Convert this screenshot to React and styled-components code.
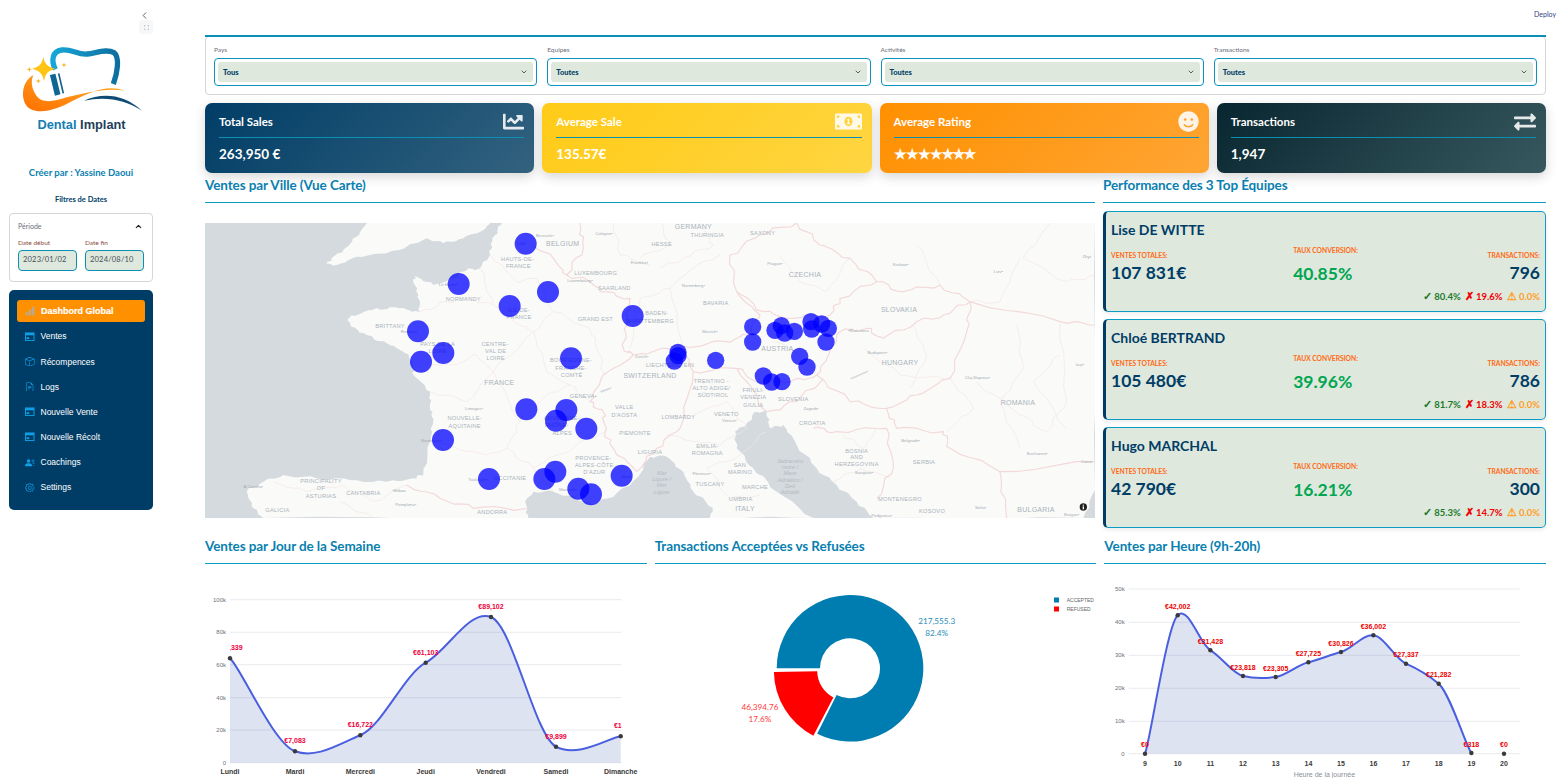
import React from 'react';
import styled, { createGlobalStyle } from 'styled-components';
import { BsBarChartFill, BsBox, BsFileEarmarkText, BsPersonLinesFill, BsGear, BsFullscreen } from 'react-icons/bs';
import { FaChartLine, FaMoneyBillAlt, FaSmile, FaExchangeAlt } from 'react-icons/fa';
import { FiChevronDown, FiChevronUp, FiChevronLeft } from 'react-icons/fi';

const GlobalStyle = createGlobalStyle`
  html, body { margin: 0; padding: 0; height: 100%; overflow: hidden; background: #fff; }
  body { font-family: Lato, "Noto Sans", sans-serif; }
  * { box-sizing: border-box; }
`;

const UI = 'Lato, "Noto Sans", sans-serif';
const ARIAL = '"Liberation Sans", Arial, sans-serif';

// the bootstrap card icon is too thin at this size, this one has the solid band
const CardIcon = () => (
  <svg width="1em" height="1em" viewBox="0 0 10 9">
    <rect x="0.5" y="0.5" width="9" height="8" fill="none" stroke="currentColor" />
    <rect x="0.5" y="0.5" width="9" height="2.5" fill="currentColor" />
    <rect x="1.5" y="5" width="3" height="2" fill="currentColor" />
  </svg>
);

// ---- data
const navItems = [
  { label: 'Ventes', icon: CardIcon },
  { label: 'Récompences', icon: BsBox },
  { label: 'Logs', icon: BsFileEarmarkText },
  { label: 'Nouvelle Vente', icon: CardIcon },
  { label: 'Nouvelle Récolt', icon: CardIcon },
  { label: 'Coachings', icon: BsPersonLinesFill },
  { label: 'Settings', icon: BsGear },
];

const filters = [
  { label: 'Pays', value: 'Tous' },
  { label: 'Equipes', value: 'Toutes' },
  { label: 'Activités', value: 'Toutes' },
  { label: 'Transactions', value: 'Toutes' },
];

const kpis = [
  { title: 'Total Sales', value: '263,950 €', icon: FaChartLine, size: 21, bg: 'linear-gradient(135deg, #003d66, #33627f)' },
  { title: 'Average Sale', value: '135.57€', icon: FaMoneyBillAlt, size: 27, bg: 'linear-gradient(135deg, #ffcb17, #ffd541)' },
  { title: 'Average Rating', value: '★★★★✯✯✯', icon: FaSmile, size: 21, stars: true, bg: 'linear-gradient(135deg, #ff9000, #ffa534)' },
  { title: 'Transactions', value: '1,947', icon: FaExchangeAlt, size: 22, bg: 'linear-gradient(135deg, #08262f, #38585f)' },
];

const teams = [
  { name: 'Lise DE WITTE', sales: '107 831€', rate: '40.85%', count: '796', ok: '80.4%', ko: '19.6%', warn: '0.0%' },
  { name: 'Chloé BERTRAND', sales: '105 480€', rate: '39.96%', count: '786', ok: '81.7%', ko: '18.3%', warn: '0.0%' },
  { name: 'Hugo MARCHAL', sales: '42 790€', rate: '16.21%', count: '300', ok: '85.3%', ko: '14.7%', warn: '0.0%' },
];

// map drawing is in a 3x grid, right half shifted by 1350
const leftDots = [[977,86],[776,207],[1044,231],[929,273],[1298,303],[654,349],[730,414],[663,440],[1113,430],[979,583],[1099,585],[1068,617],[1159,641],[729,675],[867,792],[1066,770],[1033,792],[1135,821],[1173,838],[1265,782]];
const rightDots = [[84,412],[84,422],[73,438],[197,436],[308,335],[308,381],[375,346],[394,332],[404,354],[433,349],[483,320],[485,342],[515,327],[535,340],[528,381],[449,424],[471,456],[340,483],[365,501],[396,500]];

const regionLabels = [
  ['BELGIUM',1088,86,1],['HAUTS-DE-',953,132],['FRANCE',955,154],['LUXEMBOURG',1187,173],['SAARLAND',1243,218],['NORMANDY',790,252],
  ['ILE-DE-',957,284],['FRANCE',957,306],['GRAND EST',1186,312],['BRITTANY',570,334],['PAYS DE LA',713,386],['LOIRE',713,408],
  ['CENTRE-',885,386],['VAL DE',887,408],['LOIRE',887,430],['BOURGOGNE-',1113,436],['FRANCHE-',1113,458],['COMTÉ',1115,480],
  ['SWITZERLAND',1350,484,1],['FRANCE',898,503,1],['GENEVA•',1150,542],['NOUVELLE-',794,610],['AQUITAINE',794,632],
  ['AUVERGNE-',1085,608],['RHÔNE-',1070,631],['ALPES',1087,653],['VALLE',1273,577],["D'AOSTA",1273,599],['PIEMONTE',1305,654],
  ['LIGURIA',1350,710],['PROVENCE-',1180,728],['ALPES-CÔTE',1183,750],["D'AZUR",1183,772],['OCCITANIE',930,789],
  ['PRINCIPALITY',363,798],['OF',363,820],['ASTURIAS',363,842],['CANTABRIA',490,834],['GALICIA',232,885],['ANDORRA',877,892],
  ['GERMANY',1480,36,1],['THURINGIA',1522,59],['SAXONY',1688,54],['HESSE',1385,88],['CZECHIA',1815,181,1],['BAVARIA',1547,263],
  ['SLOVAKIA',2097,286,1],['BADEN-',1370,295],['WÜRTTEMBERG',1350,317],['AUSTRIA',1732,403,1],['HUNGARY',2100,445,1],
  ['TRENTINO -',1534,497],['ALTO ADIGE/',1534,519],['SÜDTIROL',1539,541],['LIECHTENSTEIN',1410,449],['FRIULI-',1660,525],
  ['VENEZIA',1660,547],['GIULIA',1660,569],['SLOVENIA',1780,551],['ROMANIA',2454,564,1],['LOMBARDY',1435,605],['VENETO',1579,597],
  ['CROATIA',1837,624],['EMILIA-',1522,693],['ROMAGNA',1522,715],['BOSNIA',1970,708],['AND',1970,726],['HERZEGOVINA',1970,746],
  ['SERBIA',2172,741],['SAN',1620,751],['MARINO',1620,770],['TUSCANY',1530,806],['MARCHE',1665,817],['UMBRIA',1622,852],
  ['ITALY',1635,882,1],['MONTENEGRO',2100,851],['KOSOVO',2196,887],['BULGARIA',2508,886,1],
];

const cityLabels = [
  ['Brussels•',1035,62],['Cologne•',1212,54],['Frankfurt',1318,142],['Luxembourg•',1140,195],['Le Havre•',745,208],['Rennes•',627,350],
  ['Zurich•',1325,425],['Limoges•',822,579],['Bordeaux•',693,676],['Toulouse•',833,792],['Marseille•',1105,822],['Nice•',1280,784],
  ['A Coruña•',160,815],['•Bilbao',597,825],['Pamplona•',617,867],['Lille•',965,85],['Prague•',1725,145],['Krakow•',2102,147],
  ['Lviv•',2395,170],['Zhyt',2660,125],['Nuremberg•',1480,212],['Munich•',1530,348],['•Bratislava',1975,346],['Budapest•',2032,413],
  ['Iași•',2640,447],['Cluj-Napoca•',2332,488],['Venice•',1588,617],['Zagreb•',1833,581],['Belgrade•',2132,677],['Bucharest•',2512,714],
  ['Sarajevo•',1992,771],['Florence•',1505,776],['Sofia•',2342,878],['Burgas•',2615,897],['Podgorica•',2045,901],['Const',2660,740],
];

const seaLabels = [
  ['Mar',1385,773],['Ligure /',1385,792],['Mer',1385,811],['Ligure',1385,830],
  ['Jadransko',1770,737],['more /',1770,756],['Mare',1770,775],['Adriatico /',1770,794],['Deti',1770,812],['Adriatik',1770,831],
];

const countryBorders = [
  '1000,90 1060,130 1100,180 1170,200 1200,230 1290,250 1280,330 1270,400 1300,420 1210,480 1170,560 1210,590 1215,650 1240,700 1310,770',
  '620,810 720,850 820,880 980,880',
  '1140,24 1150,100 1100,180',
  '1300,420 1400,400 1450,395 1580,380 1640,360 1680,300 1610,230 1590,120 1680,60 1790,24',
  '1610,230 1690,290 1780,310 1890,300 1920,250 2030,200 1950,130 1860,90 1790,24',
  '2030,200 2110,230 2220,210 2310,260',
  '1920,350 2000,340 2050,370 2150,320 2230,300 2310,260',
  '1920,350 1880,430 1850,480 1770,500 1670,500 1610,460 1480,470 1450,400',
  '1700,590 1790,560 1870,490',
  '1850,480 1950,560 2060,580 2150,540 2250,490 2300,350 2310,260',
  '2310,260 2580,320 2685,330',
  '2060,580 2090,640 2230,650 2250,700 2400,770 2685,740',
  '1840,640 1910,650 2060,640 2080,760 2030,850',
  '1610,460 1700,590',
  '1310,770 1370,700 1440,640 1480,470',
  '2400,770 2420,909',
];

const regionBorders = [
  '870,120 950,200 1010,190 1060,290 1000,350 960,330 880,270 840,160',
  '660,290 740,260 810,250 880,270',
  '640,440 760,450 830,420 880,470 1000,350',
  '690,530 800,560 880,470 960,620 920,700 860,720 700,680',
  '1060,290 1170,340 1200,420 1210,480',
  '1000,350 1040,470 1110,510 1170,560',
  '960,620 1040,540 1110,510',
  '920,700 1000,760 1060,830',
  '1215,650 1130,690 1000,760',
  '1560,120 1480,160 1410,220 1320,250 1290,400',
  '1410,220 1450,395',
  '1480,600 1580,560 1640,640 1560,690 1400,660',
  '1720,380 1810,420 1850,480',
  '2460,130 2400,260 2310,260',
  '2550,24 2470,130 2600,200 2685,180',
  '2150,90 2220,210',
  '2330,500 2460,600 2540,650 2600,560 2580,320',
  '1990,400 2100,480 2230,490',
  '1740,120 1800,200 1880,230 1950,130',
  '2140,330 2180,420 2130,520',
  '2250,490 2320,580 2240,650',
  '2450,330 2470,460 2400,560 2460,700',
  '2580,420 2500,500 2600,640',
  '1500,24 1540,90 1450,130 1380,160',
  '1380,24 1410,90 1320,130',
  '1930,660 1990,700 2030,640',
  '1240,24 1260,120 1350,150',
  '1700,650 1620,720 1520,760 1590,850 1680,840',
  '1900,800 1980,760 2070,790',
  '220,800 320,830 430,810 520,860 620,810',
  '420,860 520,909',
];

const seaLand = {
  uk: '500,24 470,65 430,105 400,125 380,148 410,150 470,125 560,115 620,95 680,70 730,85 790,70 850,45 870,24',
  main: '905,24 885,60 878,75 870,120 840,160 800,165 760,190 700,210 650,185 640,190 655,240 660,290 600,280 530,280 470,300 445,310 455,335 500,360 560,385 610,410 640,440 640,480 690,530 690,580 700,610 690,680 670,780 640,790 560,800 450,795 350,790 250,780 190,800 140,830 160,880 190,909 985,909 975,860 1000,830 1060,830 1130,850 1180,870 1250,835 1310,790 1350,725 1400,725 1450,770 1480,830 1540,880 1530,909 1840,909 1730,830 1660,760 1610,700 1605,650 1640,625 1670,590 1700,590 1710,640 1750,630 1790,690 1850,760 1910,810 1970,860 2020,909 2650,909 2685,825 2685,24',
};

// hand-placed lines look too straight, break them up a bit
const wiggle = (pts, amp) => {
  const list = pts.split(' ').map((p) => p.split(',').map(Number));
  const out = [];
  list.forEach(([x, y], i) => {
    out.push(`${x},${y}`);
    const next = list[i + 1];
    if (!next) return;
    for (let k = 1; k < 5; k++) {
      const t = k / 5;
      const ox = Math.sin(x * 0.7 + y * 0.3 + k * 2.1) * amp;
      const oy = Math.cos(x * 0.2 + y * 0.9 + k * 1.3) * amp;
      out.push(`${(x + (next[0] - x) * t + ox).toFixed(1)},${(y + (next[1] - y) * t + oy).toFixed(1)}`);
    }
  });
  return out.join(' ');
};

const weekdays = [
  { x: 230, y: 659.3, v: '€63,339', d: 'Lundi' },
  { x: 295, y: 752.3, v: '€7,083', d: 'Mardi' },
  { x: 360.3, y: 736.3, v: '€16,722', d: 'Mercredi' },
  { x: 425.7, y: 663.7, v: '€61,103', d: 'Jeudi' },
  { x: 491, y: 618, v: '€89,102', d: 'Vendredi' },
  { x: 556, y: 747.7, v: '€9,899', d: 'Samedi' },
  { x: 620.7, y: 737.3, v: '€16,', d: 'Dimanche' },
];
const weekTicks = [['100k', 600.7], ['80k', 633.3], ['60k', 665.7], ['40k', 698.7], ['20k', 731], ['0', 763.7]];

const hourX = [1145.3, 1178, 1210.7, 1243.3, 1276, 1308.7, 1341.3, 1373.7, 1406.3, 1439, 1471.7, 1504.3];
const hourY = [754.7, 616.3, 651.3, 677, 678, 663.3, 653, 636.3, 664.7, 684.7, 754, 754.7];
const hourV = ['€0', '€42,002', '€31,428', '€23,818', '€23,305', '€27,725', '€30,826', '€36,002', '€27,337', '€21,282', '€318', '€0'];
const hours = hourX.map((x, i) => ({ x, y: hourY[i], v: hourV[i], d: String(i + 9) }));
const hourTicks = [['50k', 590], ['40k', 623.3], ['30k', 656.3], ['20k', 689.3], ['10k', 722.3], ['0', 754.7]];

// catmull-rom through the points, flatter in y so the curve stays close to the data
const smooth = (pts) => {
  const ky = 0.1;
  let d = `M${pts[0].x} ${pts[0].y}`;
  for (let i = 0; i < pts.length - 1; i++) {
    const p0 = pts[i - 1] || pts[i];
    const p1 = pts[i];
    const p2 = pts[i + 1];
    const p3 = pts[i + 2] || p2;
    const c1x = p1.x + (p2.x - p0.x) / 6;
    const c1y = p1.y + (p2.y - p0.y) * ky;
    const c2x = p2.x - (p3.x - p1.x) / 6;
    const c2y = p2.y - (p3.y - p1.y) * ky;
    d += ` C${c1x} ${c1y} ${c2x} ${c2y} ${p2.x} ${p2.y}`;
  }
  return d;
};

// donut helper, angles clockwise from the top
const ring = (cx, cy, R, r, a0, a1) => {
  const pt = (rad, a) => {
    const t = (a * Math.PI) / 180;
    return `${(cx + rad * Math.sin(t)).toFixed(2)} ${(cy - rad * Math.cos(t)).toFixed(2)}`;
  };
  const big = a1 - a0 > 180 ? 1 : 0;
  return `M${pt(R, a0)} A${R} ${R} 0 ${big} 1 ${pt(R, a1)} L${pt(r, a1)} A${r} ${r} 0 ${big} 0 ${pt(r, a0)} Z`;
};

// ---- layout
const Page = styled.div`
  display: flex;
  width: 100%;
  height: 100vh;
  overflow: hidden;
  color: #003d66;
`;

const Sidebar = styled.aside`
  flex: 0 0 162px;
  padding: 10px 9px 0;
  display: flex;
  flex-direction: column;
`;

const Collapse = styled.div`
  height: 12px;
  display: flex;
  justify-content: flex-end;
  padding-right: 3px;
  color: #555;
  font-size: 11px;
  line-height: 12px;
`;

const ExpandBox = styled.div`
  align-self: flex-end;
  margin: -2px 0 0;
  width: 14px;
  height: 14px;
  display: flex;
  align-items: center;
  justify-content: center;
  border-radius: 3px;
  background: #f6f7f9;
  color: #888;
  font-size: 5px;
`;

const LogoMark = styled.svg`
  display: block;
  width: 140px;
  height: 80px;
  margin: 6px 0 0 1px;
`;

const LogoText = styled.div`
  margin-top: -2px;
  height: 14px;
  text-align: center;
  font: bold 12.8px/14px ${ARIAL};
  color: #1f3e5a;
  padding-left: 1px;
  span { color: #157db3; }
`;

const Creator = styled.div`
  margin-top: 35px;
  height: 12px;
  line-height: 12px;
  font-size: 9.5px;
  font-weight: 700;
  text-align: center;
  color: #0a7fb0;
`;

const DateTitle = styled.div`
  margin-top: 15px;
  height: 12px;
  line-height: 12px;
  font-size: 7.5px;
  font-weight: 700;
  text-align: center;
  color: #003d66;
`;

const PeriodCard = styled.div`
  margin-top: 7px;
  height: 69px;
  padding: 7px 8px;
  border: 1px solid #d6d6d8;
  border-radius: 4px;
`;

const PeriodHead = styled.div`
  display: flex;
  align-items: center;
  justify-content: space-between;
  height: 10px;
  font-size: 7px;
  color: #6b6f7a;
  svg { font-size: 9px; color: #222; margin-right: 1px; stroke-width: 3; }
`;

const DateGrid = styled.div`
  display: grid;
  grid-template-columns: 1fr 1fr;
  gap: 8px;
  margin-top: 8px;
`;

const DateLabel = styled.div`
  height: 8px;
  line-height: 8px;
  font-size: 6.5px;
  color: #8a4b3a;
`;

const DateInput = styled.div`
  margin-top: 3px;
  height: 21px;
  padding-left: 4px;
  line-height: 18px;
  font-size: 7.5px;
  letter-spacing: 0.2px;
  color: #44505a;
  background: #dfe8dd;
  border: 1.5px solid #0a8fb5;
  border-radius: 4px;
`;

const Nav = styled.nav`
  margin-top: 8px;
  height: 220px;
  padding: 10px 8px;
  background: #003d66;
  border-radius: 5px;
  display: flex;
  flex-direction: column;
`;

const NavActive = styled.div`
  height: 22px;
  margin-bottom: 2px;
  padding-left: 8px;
  display: flex;
  align-items: center;
  gap: 6px;
  background: #ff9000;
  border-radius: 3px;
  color: #fff;
  font: bold 9px ${ARIAL};
  -webkit-text-stroke: 0.2px #fff;
  svg { font-size: 10px; color: #b9a98f; }
`;

const NavItem = styled.div`
  height: 25.5px;
  padding-left: 8px;
  display: flex;
  align-items: center;
  gap: 6px;
  color: #fff;
  font: 8.5px ${ARIAL};
  svg { font-size: 9.5px; color: #0f9fe6; flex: none; }
`;

const Main = styled.main`
  flex: 1;
  min-width: 0;
  padding: 0 12px 0 43px;
  display: flex;
  flex-direction: column;
  > * { flex-shrink: 0; }
`;

const Deploy = styled.div`
  height: 35px;
  padding-top: 9px;
  margin-right: -10px;
  text-align: right;
  font-size: 7px;
  line-height: 10px;
  color: #31427f;
`;

const FilterCard = styled.section`
  position: relative;
  padding: 8px;
  border: 1px solid #d6d6d8;
  border-radius: 4px;
  margin-top: 1px;
  display: grid;
  grid-template-columns: repeat(4, 1fr);
  gap: 10px;
  &::before {
    content: '';
    position: absolute;
    top: -2px;
    left: -1px;
    right: -1px;
    height: 1.5px;
    background: #0a8fb5;
  }
`;

const FilterLabel = styled.div`
  height: 10px;
  line-height: 10px;
  font-size: 6.5px;
  color: #6b6f7a;
`;

const Select = styled.div`
  margin-top: 3px;
  height: 28px;
  padding: 3px;
  border: 1.5px solid #0a94bd;
  border-radius: 4px;
`;

const SelectInner = styled.div`
  height: 100%;
  padding: 0 5px;
  display: flex;
  align-items: center;
  justify-content: space-between;
  background: #dfe8dd;
  border-radius: 3px;
  font-size: 7.5px;
  font-weight: 900;
  color: #003d66;
  svg { font-size: 8px; color: #444; stroke-width: 2.5; }
`;

const KpiGrid = styled.section`
  margin-top: 8px;
  display: grid;
  grid-template-columns: repeat(4, 1fr);
  gap: 8px;
`;

const Kpi = styled.div`
  height: 70px;
  padding: 0 10px 0 14px;
  border-radius: 7px;
  background: ${(p) => p.$bg};
  box-shadow: 0 4px 12px rgba(0, 0, 0, 0.16);
  color: #fff;
`;

const KpiHead = styled.div`
  height: 35px;
  display: flex;
  align-items: center;
  justify-content: space-between;
  border-bottom: 1px solid #0a8fb5;
  font-size: 11.5px;
  font-weight: 700;
  padding-top: 2px;
  svg { font-size: ${(p) => p.$icon}px; color: #fff; opacity: 0.88; margin-top: 1px; }
`;

const KpiValue = styled.div`
  height: 34px;
  line-height: 32px;
  font-size: 13.5px;
  font-weight: 700;
  letter-spacing: ${(p) => (p.$stars ? '-1px' : '0')};
  font-family: ${UI};
`;

const Columns = styled.div`
  display: grid;
  grid-template-columns: ${(p) => p.$cols};
  gap: 8px;
`;

const Heading = styled.h2`
  margin: ${(p) => p.$top || 0}px 0 0;
  padding: 3px 0 8px;
  line-height: 18px;
  font-size: 13.5px;
  font-weight: 700;
  letter-spacing: -0.1px;
  color: #0a7fb0;
  border-bottom: 1.5px solid #0a9cc4;
`;

const MapFrame = styled.svg`
  display: block;
  width: 890px;
  height: 295px;
  margin-top: 19.5px;
  background: #d4dadd;
`;

const MapText = styled.text`
  font-family: ${ARIAL};
  text-anchor: middle;
  font-size: ${(p) => (p.$big ? 21 : 17)}px;
  letter-spacing: 0.8px;
  fill: #a9b3ba;
`;

const CityText = styled.text`
  font-family: ${ARIAL};
  text-anchor: middle;
  font-size: 13px;
  fill: #a4acb2;
`;

const SeaText = styled.text`
  font-family: ${ARIAL};
  font-style: italic;
  text-anchor: middle;
  font-size: 17px;
  fill: #b2bcc2;
`;

const TeamList = styled.div`
  margin-top: 7.5px;
  display: flex;
  flex-direction: column;
  gap: 6.5px;
`;

const TeamCard = styled.div`
  height: 101.5px;
  padding: 8px 5px 8px 5px;
  display: flex;
  flex-direction: column;
  background: #dfe8dd;
  border: 1.5px solid #0a9cc4;
  border-left: 3px solid #003d66;
  border-radius: 5px;
  box-shadow: 0 2px 4px rgba(0, 0, 0, 0.08);
`;

const TeamName = styled.div`
  line-height: 20px;
  font-size: 14px;
  font-weight: 700;
  color: #003d66;
`;

const Metrics = styled.div`
  margin-top: 6px;
  display: grid;
  grid-template-columns: 1fr auto 1fr;
`;

const Metric = styled.div`
  padding-top: ${(p) => (p.$mid ? 0 : 5)}px;
  text-align: ${(p) => (p.$right ? 'right' : 'left')};
`;

const MetricLabel = styled.div`
  line-height: 8px;
  font-size: 6.7px;
  font-weight: 700;
  color: #ff6a13;
`;

const MetricValue = styled.div`
  margin-top: ${(p) => (p.$mid ? 8 : 2)}px;
  line-height: 24px;
  font-size: 17.5px;
  font-weight: 700;
  color: ${(p) => (p.$mid ? '#00a651' : '#003d66')};
`;

const Stats = styled.div`
  margin-top: auto;
  display: flex;
  justify-content: flex-end;
  gap: 4px;
  line-height: 12px;
  font-size: 9.5px;
  font-weight: 700;
`;

const Stat = styled.span`
  color: ${(p) => p.$color};
  i { font-style: normal; font-size: 11px; }
`;

const Chart = styled.svg`
  display: block;
  width: 100%;
  height: 220px;
  overflow: hidden;
`;

const ValueLabel = styled.text`
  font: bold 7px ${ARIAL};
  text-anchor: middle;
  fill: ${(p) => p.$color};
`;

const AxisDay = styled.text`
  font: bold 7px ${ARIAL};
  text-anchor: middle;
  fill: #3a3a3a;
`;

const Tick = styled.text`
  font: 6px ${ARIAL};
  text-anchor: end;
  fill: #6e7079;
`;

const AxisTitle = styled.text`
  font: 7px ${ARIAL};
  text-anchor: middle;
  fill: #8a8f99;
`;

const DonutLabel = styled.text`
  font: 8.2px ${UI};
  text-anchor: middle;
  fill: ${(p) => p.$color};
`;

const LegendText = styled.text`
  font: 5px ${ARIAL};
  fill: #666;
`;

const Logo = () => (
  <LogoMark viewBox="0 0 420 240">
    <defs>
      <linearGradient id="toothBlue" x1="0" y1="0" x2="1" y2="0">
        <stop offset="0" stopColor="#17a6d8" />
        <stop offset="1" stopColor="#0d6f9f" />
      </linearGradient>
      <linearGradient id="swoosh" x1="0" y1="1" x2="1" y2="0">
        <stop offset="0" stopColor="#ff6f00" />
        <stop offset="1" stopColor="#ffb52e" />
      </linearGradient>
    </defs>
    <path d="M136 88 C122 60 128 34 155 30 C185 26 205 46 232 42 C262 38 290 26 312 38 C330 52 322 100 310 132" fill="none" stroke="url(#toothBlue)" strokeWidth="16" />
    <path d="M128 103 L143 165" stroke="#0e6694" strokeWidth="17" />
    <path d="M146 100 L160 160" stroke="#16618c" strokeWidth="5" />
    <path d="M70 106 C38 122 30 170 50 198 C75 226 130 212 170 192 C230 160 290 130 345 152 C290 142 225 158 170 172 C130 186 95 190 80 168 C64 146 62 124 70 106 Z" fill="url(#swoosh)" />
    <path d="M222 182 C275 158 340 160 396 212 C345 178 285 168 222 182 Z" fill="#0f4c75" />
    <path d="M100 50 C104 72 112 80 136 86 C114 92 106 100 102 124 C98 100 88 92 66 86 C88 80 96 72 100 50 Z" fill="#ffc414" />
    <path d="M58 80 L60 86 L66 88 L60 90 L58 96 L56 90 L50 88 L56 86 Z" fill="#ffb020" />
    <path d="M85 116 L87 121 L92 123 L87 125 L85 130 L83 125 L78 123 L83 121 Z" fill="#ffb020" />
    <path d="M162 68 L164 73 L169 75 L164 77 L162 82 L160 77 L155 75 L160 73 Z" fill="#ffb020" />
  </LogoMark>
);

const GeoMap = () => (
  <MapFrame viewBox="15 24 2670 885">
    <polygon points={wiggle(seaLand.uk, 3)} fill="#fafaf9" />
    <polygon points={wiggle(seaLand.main, 4)} fill="#fafaf9" />
    <path d="M1200 528 L1235 516 L1232 522 L1204 533 Z" fill="#d4dadd" />
    <path d="M1950 490 L2005 466 L2003 472 L1955 493 Z" fill="#d4dadd" />
    {regionBorders.map((pts, i) => (
      <polyline key={i} points={wiggle(pts, 5)} fill="none" stroke="#f3e6e6" strokeWidth="2" />
    ))}
    {countryBorders.map((pts, i) => (
      <polyline key={i} points={wiggle(pts, 6)} fill="none" stroke="#f3d9d9" strokeWidth="3.5" strokeLinejoin="round" />
    ))}
    {seaLabels.map(([t, x, y], i) => <SeaText key={i} x={x} y={y + 6}>{t}</SeaText>)}
    {regionLabels.map(([t, x, y, big], i) => <MapText key={i} x={x} y={y + 6} $big={big}>{t}</MapText>)}
    {cityLabels.map(([t, x, y], i) => <CityText key={i} x={x} y={y + 5}>{t}</CityText>)}
    {leftDots.map(([x, y], i) => <circle key={i} cx={x} cy={y} r="33" fill="#0000ff" fillOpacity="0.75" />)}
    {rightDots.map(([x, y], i) => <circle key={i} cx={x + 1350} cy={y} r="26" fill="#0000ff" fillOpacity="0.75" />)}
    <circle cx="2650" cy="876" r="11" fill="#222" />
    <rect x="2648" y="874" width="4" height="9" fill="#fff" />
    <rect x="2648" y="869" width="4" height="3" fill="#fff" />
  </MapFrame>
);

const LineChart = ({ box, points, ticks, drawTo, left, right, base, labelColor, labelDy, axisY, children, id }) => {
  const drawn = points.slice(0, drawTo);
  const line = smooth(drawn);
  const area = `${line} L${drawn[drawn.length - 1].x} ${base} L${drawn[0].x} ${base} Z`;
  return (
    <Chart viewBox={box} preserveAspectRatio="xMinYMin slice">
      <defs>
        <clipPath id={id}>
          <rect x={left} y="570" width={right - left} height={base - 570} />
        </clipPath>
      </defs>
      {ticks.map(([t, y]) => (
        <g key={t}>
          <line x1={left} x2={right} y1={y} y2={y} stroke="#e9ebef" strokeWidth="1" />
          <Tick x={left - 4} y={y + 2}>{t}</Tick>
        </g>
      ))}
      <g clipPath={`url(#${id})`}>
        <path d={area} fill="#3c5ab4" fillOpacity="0.17" />
        <path d={line} fill="none" stroke="#4a5fe0" strokeWidth="2" />
        {points.map((p) => (
          <ValueLabel key={p.d} x={p.x} y={p.y - labelDy} $color={labelColor}>{p.v}</ValueLabel>
        ))}
      </g>
      {points.map((p) => (
        <circle key={p.d} cx={p.x} cy={p.y} r="2.2" fill="#3a3a3a" />
      ))}
      {points.map((p) => (
        <AxisDay key={p.d} x={p.x} y={axisY}>{p.d}</AxisDay>
      ))}
      {children}
    </Chart>
  );
};

const Donut = () => (
  <Chart viewBox="655 565 441.67 220" preserveAspectRatio="xMinYMin slice">
    <path d={ring(850, 669.3, 73.3, 30, 270, 566.6)} fill="#007db0" />
    <path d={ring(847.2, 671.8, 73.3, 30, 207.5, 269)} fill="#ff0000" />
    <DonutLabel x="936.7" y="625.5" $color="#2b8db8">217,555.3</DonutLabel>
    <DonutLabel x="936.7" y="637.5" $color="#2b8db8">82.4%</DonutLabel>
    <DonutLabel x="760" y="711.5" $color="#ff3b3b">46,394.76</DonutLabel>
    <DonutLabel x="760" y="723.5" $color="#ff3b3b">17.6%</DonutLabel>
    <rect x="1054" y="598.5" width="5" height="5" fill="#007db0" />
    <rect x="1054" y="607.5" width="5" height="5" fill="#ff0000" />
    <LegendText x="1066.7" y="603.5">ACCEPTED</LegendText>
    <LegendText x="1066.7" y="612.5">REFUSED</LegendText>
  </Chart>
);

function App() {
  return (
    <Page>
      <GlobalStyle />
      <Sidebar>
        <Collapse><FiChevronLeft /></Collapse>
        <ExpandBox><BsFullscreen /></ExpandBox>
        <Logo />
        <LogoText><span>Dental</span> Implant</LogoText>
        <Creator>Créer par : Yassine Daoui</Creator>
        <DateTitle>Filtres de Dates</DateTitle>
        <PeriodCard>
          <PeriodHead>Période <FiChevronUp /></PeriodHead>
          <DateGrid>
            <div>
              <DateLabel>Date début</DateLabel>
              <DateInput>2023/01/02</DateInput>
            </div>
            <div>
              <DateLabel>Date fin</DateLabel>
              <DateInput>2024/08/10</DateInput>
            </div>
          </DateGrid>
        </PeriodCard>
        <Nav>
          <NavActive><BsBarChartFill /> Dashbord Global</NavActive>
          {navItems.map((item) => (
            <NavItem key={item.label}><item.icon /> {item.label}</NavItem>
          ))}
        </Nav>
      </Sidebar>

      <Main>
        <Deploy>Deploy</Deploy>
        <FilterCard>
          {filters.map((f) => (
            <div key={f.label}>
              <FilterLabel>{f.label}</FilterLabel>
              <Select>
                <SelectInner>{f.value} <FiChevronDown /></SelectInner>
              </Select>
            </div>
          ))}
        </FilterCard>

        <KpiGrid>
          {kpis.map((k) => (
            <Kpi key={k.title} $bg={k.bg}>
              <KpiHead $icon={k.size}>{k.title} <k.icon /></KpiHead>
              <KpiValue $stars={k.stars}>{k.value}</KpiValue>
            </Kpi>
          ))}
        </KpiGrid>

        <Columns $cols="890px 1fr">
          <div>
            <Heading>Ventes par Ville (Vue Carte)</Heading>
            <GeoMap />
          </div>
          <div>
            <Heading>Performance des 3 Top Équipes</Heading>
            <TeamList>
              {teams.map((t) => (
                <TeamCard key={t.name}>
                  <TeamName>{t.name}</TeamName>
                  <Metrics>
                    <Metric>
                      <MetricLabel>VENTES TOTALES:</MetricLabel>
                      <MetricValue>{t.sales}</MetricValue>
                    </Metric>
                    <Metric $mid>
                      <MetricLabel>TAUX CONVERSION:</MetricLabel>
                      <MetricValue $mid>{t.rate}</MetricValue>
                    </Metric>
                    <Metric $right>
                      <MetricLabel>TRANSACTIONS:</MetricLabel>
                      <MetricValue>{t.count}</MetricValue>
                    </Metric>
                  </Metrics>
                  <Stats>
                    <Stat $color="#1a7a2a"><i>✓</i> {t.ok}</Stat>
                    <Stat $color="#f00000"><i>✗</i> {t.ko}</Stat>
                    <Stat $color="#ff9d1e"><i>⚠</i> {t.warn}</Stat>
                  </Stats>
                </TeamCard>
              ))}
            </TeamList>
          </div>
        </Columns>

        <Columns $cols="repeat(3, 1fr)">
          <div>
            <Heading $top={5.5}>Ventes par Jour de la Semaine</Heading>
            <LineChart id="weekClip" box="205 565 441.67 220" points={weekdays} ticks={weekTicks} drawTo={7} left={230} right={621.5} base={763.7} labelColor="#f0003c" labelDy={8} axisY={775} />
          </div>
          <div>
            <Heading $top={5.5}>Transactions Acceptées vs Refusées</Heading>
            <Donut />
          </div>
          <div>
            <Heading $top={5.5}>Ventes par Heure (9h-20h)</Heading>
            <LineChart id="hourClip" box="1104.3 565 441.67 220" points={hours} ticks={hourTicks} drawTo={11} left={1129} right={1520} base={754.7} labelColor="#f00000" labelDy={6.5} axisY={766.5}>
              <AxisTitle x="1324.7" y="778">Heure de la journée</AxisTitle>
            </LineChart>
          </div>
        </Columns>
      </Main>
    </Page>
  );
}

export default App;
